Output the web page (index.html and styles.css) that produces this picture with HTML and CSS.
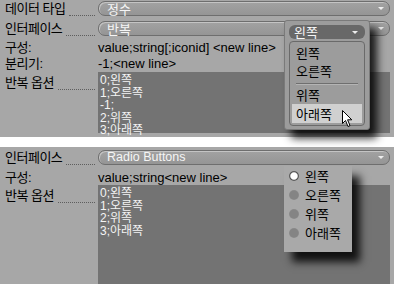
FILE: index.html
```html
<!DOCTYPE html>
<html lang="ko">
<head>
  <meta charset="UTF-8">
  <title>반복 옵션</title>
  <link rel="stylesheet" href="styles.css">
</head>
<body>
  <div class="panel panel-top">
    <div class="row row-field">
      <span class="label dots">데이터 타입</span>
      <div class="pill">정수</div>
    </div>
    <div class="row row-field row-second">
      <span class="label dots">인터페이스</span>
      <div class="pill">반복</div>
    </div>
    <div class="row row-text">
      <span class="label">구성:</span>
      <span class="value">value;string[;iconid] &lt;new line&gt;</span>
    </div>
    <div class="row row-text">
      <span class="label">분리기:</span>
      <span class="value">-1;&lt;new line&gt;</span>
    </div>
    <div class="row">
      <span class="label dots label-area">반복 옵션</span>
      <div class="options options-top">0;왼쪽<br>1;오른쪽<br>-1;<br>2;위쪽<br>3;아래쪽</div>
    </div>
  </div>

  <div class="gap"></div>

  <div class="panel panel-bottom">
    <div class="row row-field">
      <span class="label dots">인터페이스</span>
      <div class="pill pill-latin">Radio Buttons</div>
    </div>
    <div class="row row-text row-short">
      <span class="label">구성:</span>
      <span class="value">value;string&lt;new line&gt;</span>
    </div>
    <div class="row">
      <span class="label dots label-area">반복 옵션</span>
      <div class="options options-bottom">0;왼쪽<br>1;오른쪽<br>2;위쪽<br>3;아래쪽</div>
    </div>
  </div>

  <!-- 드롭다운 메뉴 -->
  <div class="menu">
    <div class="menu-head">왼쪽<span class="menu-arrow"></span></div>
    <div class="menu-list">
      <div class="menu-item">왼쪽</div>
      <div class="menu-item">오른쪽</div>
      <div class="menu-sep"></div>
      <div class="menu-item">위쪽</div>
      <div class="menu-item hover">아래쪽</div>
    </div>
    <svg class="cursor" width="11" height="18" viewBox="0 0 11 18">
      <path d="M0.5 0.5 L0.5 13.5 L3.5 10.5 L6 16.5 L8 15.6 L5.6 9.8 L9.8 9.8 Z" fill="#fff" stroke="#000" stroke-width="1"/>
    </svg>
  </div>

  <!-- 라디오 버튼 -->
  <div class="radio-pop">
    <div class="radio-item"><span class="radio checked"></span>왼쪽</div>
    <div class="radio-item"><span class="radio"></span>오른쪽</div>
    <div class="radio-item"><span class="radio"></span>위쪽</div>
    <div class="radio-item"><span class="radio"></span>아래쪽</div>
  </div>
</body>
</html>
```

FILE: styles.css
```css
* {
  margin: 0;
  padding: 0;
  box-sizing: border-box;
}

body {
  width: 394px;
  height: 284px;
  overflow: hidden;
  position: relative;
  background-color: #fff;
  font-family: "Liberation Sans", "Noto Sans CJK KR", sans-serif;
  font-size: 13px;
  color: #000;
}

.panel {
  background-color: #a7a7a7;
  padding: 1px 4px 0 5px;
}

.panel-top {
  height: 137px;
}

.panel-bottom {
  height: 137px;
  padding-top: 3px;
}

.gap {
  height: 10px;
  background-color: #fff;
}

.row {
  display: flex;
  align-items: flex-start;
}

.row-field {
  height: 20px;
}

.row-second {
  height: 19px;
}

.row-text {
  height: 16px;
  line-height: 16px;
}

.row-short {
  height: 15px;
}

/* 왼쪽 라벨 + 점선 */
.label {
  width: 93px;
  height: 16px;
  line-height: 16px;
  display: flex;
  flex-shrink: 0;
  font-family: "Liberation Sans", "Noto Sans CJK KR", sans-serif;
  font-size: 13px;
  letter-spacing: -0.5px;
  white-space: nowrap;
}

.label.dots::after {
  content: "";
  flex: 1;
  align-self: flex-end;
  margin: 0 3px 1px 4px;
  border-bottom: 1px dotted #5e5e5e;
}

.label-area {
  margin-top: 3px;
}

.value {
  font-size: 13px;
  white-space: nowrap;
}

/* 드롭다운 필드 */
.pill {
  flex: 1;
  height: 15px;
  position: relative;
  padding-left: 8px;
  border: 1px solid #6e6e6e;
  border-radius: 7px;
  background: linear-gradient(#a2a2a2, #959595);
  box-shadow: inset 1px 1px 0 #c4c4c4;
  color: #f5f5f5;
  font-family: "Noto Sans CJK KR", sans-serif;
  font-size: 13px;
  line-height: 13px;
}

.pill-latin {
  font-family: "Liberation Sans", sans-serif;
  font-size: 12.5px;
}

.pill::after {
  content: "";
  position: absolute;
  right: 5px;
  top: 5px;
  border-left: 3px solid transparent;
  border-right: 3px solid transparent;
  border-top: 3px solid #eee;
}

/* 텍스트 영역 */
.options {
  flex: 1;
  background-color: #737373;
  color: #f4f4f4;
  padding: 2px 2px;
  font-size: 12px;
  line-height: 12.5px;
  white-space: nowrap;
}

.options-top {
  height: 61px;
}

.options-bottom {
  height: 99px;
}

/* 드롭다운 메뉴 */
.menu {
  position: absolute;
  left: 284px;
  top: 20px;
  width: 86px;
  height: 110px;
  padding: 4px;
  background-color: #9c9c9c;
  border: 1px solid #7a7a7a;
  border-radius: 3px;
  box-shadow: 7px 8px 8px rgba(0, 0, 0, 0.85);
  font-family: "Noto Sans CJK KR", sans-serif;
  font-size: 13px;
}

.menu-head {
  height: 14px;
  display: flex;
  align-items: center;
  justify-content: space-between;
  padding: 0 7px 0 5px;
  background-color: #686868;
  border-radius: 6px;
  color: #f5f5f5;
  line-height: 14px;
}

.menu-arrow {
  border-left: 3px solid transparent;
  border-right: 3px solid transparent;
  border-top: 3px solid #eee;
}

.menu-list {
  margin-top: 2px;
  padding: 2px 2px;
  border: 1px solid #6a6a6a;
  border-radius: 4px;
}

.menu-item {
  height: 18px;
  line-height: 18px;
  padding-left: 4px;
}

.menu-item.hover {
  height: 19px;
  line-height: 19px;
  background-color: #d0d0d0;
}

.menu-sep {
  height: 6px;
  margin: 0 4px;
  position: relative;
}

.menu-sep::after {
  content: "";
  position: absolute;
  left: 0;
  right: 0;
  top: 3px;
  border-top: 1px solid #6f6f6f;
  border-bottom: 1px solid #b4b4b4;
}

.cursor {
  position: absolute;
  left: 57px;
  top: 89px;
}

/* 라디오 버튼 팝업 */
.radio-pop {
  position: absolute;
  left: 284px;
  top: 166px;
  width: 68px;
  height: 86px;
  padding-left: 5px;
  background-color: #a9a9a9;
  box-shadow: 8px 10px 8px rgba(0, 0, 0, 0.85);
  font-family: "Noto Sans CJK KR", sans-serif;
  font-size: 13px;
}

.radio-item {
  height: 19px;
  display: flex;
  align-items: center;
  gap: 6px;
}

.radio {
  width: 10px;
  height: 10px;
  border-radius: 50%;
  background: radial-gradient(circle, #848484 55%, #9a9a9a 100%);
}

.radio.checked {
  background: radial-gradient(circle, #fff 45%, #555 60%, #8a8a8a 100%);
}
```
